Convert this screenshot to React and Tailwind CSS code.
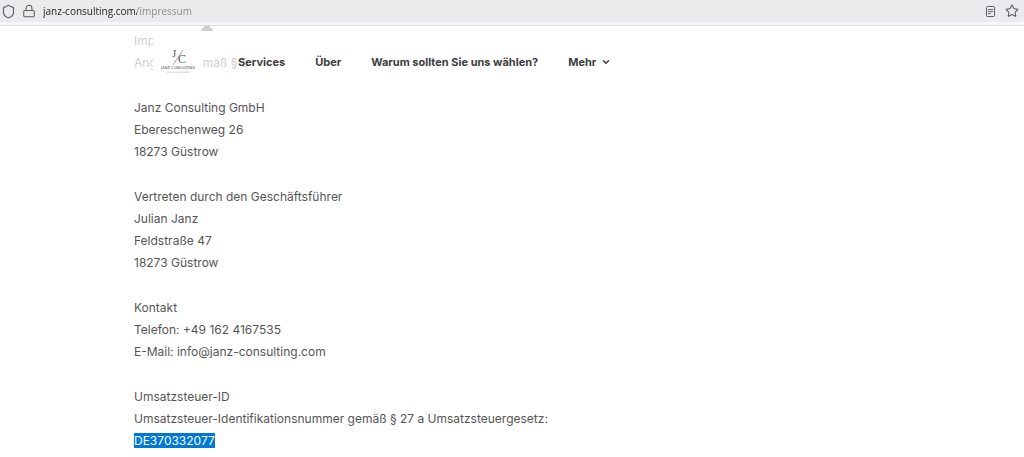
import { Shield, Lock, Star, ChevronDown } from "lucide-react";

const blocks = [
  ["Impressum", "Angaben gemäß § 5"],
  ["Janz Consulting GmbH", "Ebereschenweg 26", "18273 Güstrow"],
  ["Vertreten durch den Geschäftsführer", "Julian Janz", "Feldstraße 47", "18273 Güstrow"],
  ["Kontakt", "Telefon: +49 162 4167535", "E-Mail: info@janz-consulting.com"],
];

function ReaderIcon() {
  return (
    <svg width="9" height="11" viewBox="0 0 9 11" fill="none" stroke="#5b5b60" aria-hidden="true">
      <rect x="0.5" y="0.5" width="8" height="10" rx="1" />
      <path d="M2 3.5h5M2 5.5h5M2 7.5h3" strokeWidth="0.9" />
    </svg>
  );
}

function Logo() {
  return (
    <svg width="50" height="54" viewBox="0 0 50 54" role="img" aria-label="Janz Consulting" className="bg-white">
      <g fontFamily="'Liberation Serif', serif" fill="#5c5c5c">
        <text x="19" y="31" fontSize="11">J</text>
        <text x="25" y="37" fontSize="12">C</text>
      </g>
      <path d="M30 24 20 39" stroke="#777" strokeWidth="0.7" />
      <text x="25" y="43" fontSize="3.7" fontWeight="500" textAnchor="middle" fontFamily="'DejaVu Sans', sans-serif" fill="#444">JANZ CONSULTING</text>
      <text x="25" y="47" fontSize="2.1" textAnchor="middle" fontFamily="'DejaVu Sans', sans-serif" fill="#999">FINANCIAL ADVISORS</text>
    </svg>
  );
}

export default function App() {
  return (
    <div className="bg-white">
      <header className="flex h-[26px] items-start border-b border-[#dcdce0] bg-[#f7f7f9]">
        <div className="flex h-[22px] w-full items-center rounded-br bg-[#ebebed] pr-[5px] pl-px text-[#5b5b60]">
          <Shield size={15} strokeWidth={1.8} />
          <Lock size={14} strokeWidth={1.8} className="ml-[6px]" />
          <input
            type="text"
            aria-label="Adresse"
            defaultValue="janz-consulting.com/impressum"
            className="ml-[7px] min-w-0 flex-1 bg-linear-to-r from-[#1c1c20] from-[94px] to-[#85858a] to-[94px] bg-clip-text font-['Open_Sans',sans-serif] text-[10px] leading-4 text-transparent outline-none"
          />
          <button aria-label="Leseansicht" className="mr-[10px]"><ReaderIcon /></button>
          <button aria-label="Lesezeichen"><Star size={14} strokeWidth={1.8} /></button>
        </div>
      </header>

      <div className="relative font-[Inter,sans-serif] text-[#555555]">
        <main className="flex flex-col gap-[23px] pt-[4px] pr-4 pl-[134px] text-[12px] leading-[22px]">
          {blocks.map((lines) => (
            <section key={lines[0]}>
              {lines.map((line) => <p key={line}>{line}</p>)}
            </section>
          ))}
          <section>
            <p>Umsatzsteuer-ID</p>
            <p>Umsatzsteuer-Identifikationsnummer gemäß § 27 a Umsatzsteuergesetz:</p>
            <p><mark className="bg-[#0078d7] text-white">DE370332077</mark></p>
          </section>
        </main>

        <div className="absolute inset-x-0 top-0 flex h-[60px] items-start bg-white/70 pl-[153px]">
          <Logo />
          <svg width="12" height="5" viewBox="0 0 12 5" className="absolute top-0 left-[201px]" aria-hidden="true">
            <path d="M3 0h6v2l3 1v2H0V3l3-1z" fill="#cfcfcf" />
          </svg>
          <nav className="ml-[35px] flex items-center gap-[30px] pt-[28px] text-[11px] leading-4 font-bold text-[#3c3c3e]">
            <a href="#services">Services</a>
            <a href="#ueber">Über</a>
            <a href="#warum">Warum sollten Sie uns wählen?</a>
            <button className="flex items-center gap-[5px]">Mehr <ChevronDown size={10} strokeWidth={3.5} /></button>
          </nav>
        </div>
      </div>
    </div>
  );
}
